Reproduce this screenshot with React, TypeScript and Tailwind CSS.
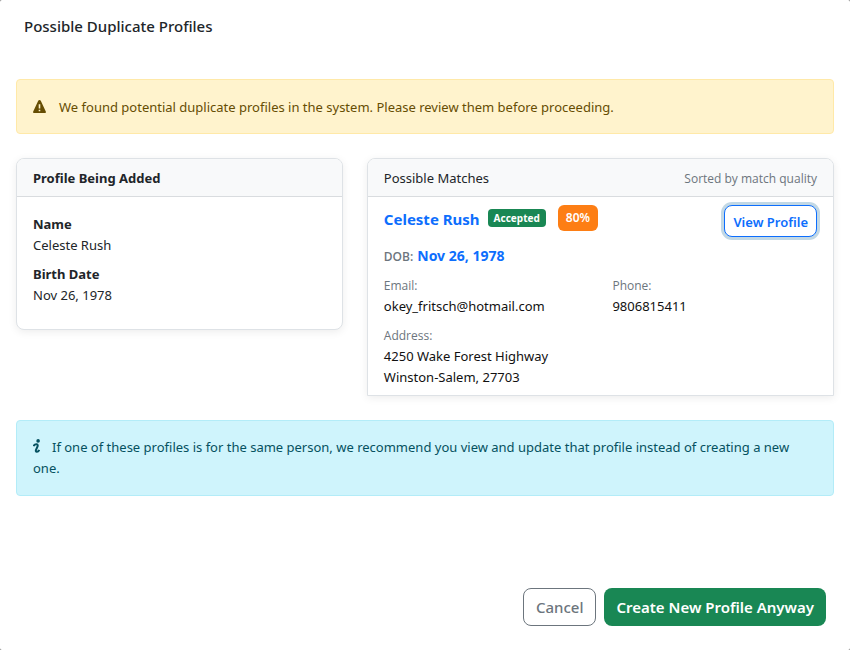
import type { ReactNode } from "react";

const labelText = "font-['Open_Sans',sans-serif] text-[12px] leading-5 text-[#6c757d]";

function Field({ label, children }: { label: string; children: ReactNode }) {
  return (
    <div>
      <dt className={labelText}>{label}</dt>
      <dd>{children}</dd>
    </div>
  );
}

function WarningIcon() {
  return (
    <svg className="mt-[3px] h-[13px] w-[13px] shrink-0" viewBox="0 0 13 13" fill="currentColor" aria-hidden="true">
      <path
        fillRule="evenodd"
        d="M6.500 0C7.100 0 7.600 .3 7.900 .9L12.900 11.700C13.200 12.400 12.800 13 12 13H1C.2 13-.2 12.400 .1 11.700L5.100 .9C5.400 .3 5.900 0 6.500 0ZM5.700 4.300V8.600H7.300V4.300ZM5.700 9.700V11.300H7.300V9.700Z"
      />
    </svg>
  );
}

function InfoIcon() {
  return (
    <svg className="mr-3 inline-block h-[14px] w-[7px] align-[-1px]" viewBox="0 0 7 14" aria-hidden="true">
      <circle cx="5.1" cy="1.900" r="1.800" fill="currentColor" />
      <path
        d="M.5 7.200C1.200 5.700 2.400 5.100 3.600 5.200C5 5.400 4.900 6.800 4.300 8L3.100 10.600C2.500 12 2.900 12.900 3.900 12.800C4.900 12.700 5.700 12 6.300 10.900"
        fill="none"
        stroke="currentColor"
        strokeWidth="2"
      />
    </svg>
  );
}

const card = "border border-[#dee2e6] bg-white shadow-[0_2px_8px_rgba(0,0,0,0.075)]";
const cardHeader = "flex items-center justify-between border-b border-[#d9dcdf] bg-[#f8f9fa] px-4 pt-[9px] pb-[7px]";

export default function App() {
  return (
    <div className="min-h-screen bg-[#808080] font-['Noto_Sans',sans-serif] text-[13px] leading-[21px] text-[#212529]">
      <div className="flex min-h-screen flex-col rounded-[2px] bg-white">
        <header className="px-6 py-4">
          <h1 className="text-[15px] font-medium">Possible Duplicate Profiles</h1>
        </header>

        <main className="flex flex-col gap-6 px-4 pt-[26px]">
          <div role="alert" className="flex gap-[13px] rounded-[4px] border border-[#ffe9a8] bg-[#fff3cd] px-4 pt-[17px] pb-[15px] text-[#664d03]">
            <WarningIcon />
            <span>We found potential duplicate profiles in the system. Please review them before proceeding.</span>
          </div>

          <div className="grid grid-cols-12 items-start gap-6">
            <section className={`${card} col-span-5 overflow-hidden rounded-lg`}>
              <div className={cardHeader}>
                <h2 className="font-bold">Profile Being Added</h2>
              </div>
              <dl className="flex flex-col gap-2 px-4 pt-[17px] pb-[23px]">
                <div>
                  <dt className="font-bold">Name</dt>
                  <dd>Celeste Rush</dd>
                </div>
                <div>
                  <dt className="font-bold">Birth Date</dt>
                  <dd>Nov 26, 1978</dd>
                </div>
              </dl>
            </section>

            <section className={`${card} col-span-7 overflow-hidden rounded-t-lg`}>
              <div className={cardHeader}>
                <h2>Possible Matches</h2>
                <span className={labelText}>Sorted by match quality</span>
              </div>
              <div className="flex flex-col gap-2 px-4 pt-2 pb-[7px]">
                <div className="flex items-start justify-between">
                  <div className="flex items-center">
                    <a href="#profile" className="pt-[2px] text-[15px] font-bold text-[#0d6efd]">Celeste Rush</a>
                    <span className="ml-2 rounded-[4px] bg-[#198754] px-[6px] text-[10px] leading-[18px] font-bold text-white">Accepted</span>
                    <span className="ml-3 rounded-md bg-[#fd7e14] px-2 text-[12px] leading-[26px] font-semibold text-white">80%</span>
                  </div>
                  <button type="button" className="h-8 rounded-lg border border-[#0d6efd] bg-white px-2 pt-[2px] text-[13px] font-semibold text-[#0d6efd] shadow-[0_0_0_3px_#c2d8e5]">
                    View Profile
                  </button>
                </div>
                <p className="flex h-[23px] items-baseline gap-1">
                  <span className="font-['Open_Sans',sans-serif] text-[12px] font-semibold text-[#6c757d]">DOB:</span>
                  <strong className="text-[14px] font-bold text-[#0d6efd]">Nov 26, 1978</strong>
                </p>
                <dl className="grid grid-cols-2 gap-x-6 gap-y-[9px] text-[#111111]">
                  <Field label="Email:">okey_fritsch@hotmail.com</Field>
                  <Field label="Phone:">9806815411</Field>
                  <Field label="Address:">
                    4250 Wake Forest Highway
                    <br />
                    Winston-Salem, 27703
                  </Field>
                </dl>
              </div>
            </section>
          </div>

          <div role="note" className="rounded-[4px] border border-[#b3ecf8] bg-[#cff4fc] p-4 text-[#055160]">
            <InfoIcon />
            If one of these profiles is for the same person, we recommend you view and update that profile instead of creating a new one.
          </div>
        </main>

        <footer className="mt-auto flex justify-end gap-2 p-6 text-[15px] leading-6">
          <button type="button" className="h-[38px] rounded-lg border border-[#6c757d] bg-white px-3 font-medium text-[#6c757d]">
            Cancel
          </button>
          <button type="button" className="h-[38px] rounded-lg bg-[#198754] px-3 font-semibold text-white">
            Create New Profile Anyway
          </button>
        </footer>
      </div>
    </div>
  );
}
